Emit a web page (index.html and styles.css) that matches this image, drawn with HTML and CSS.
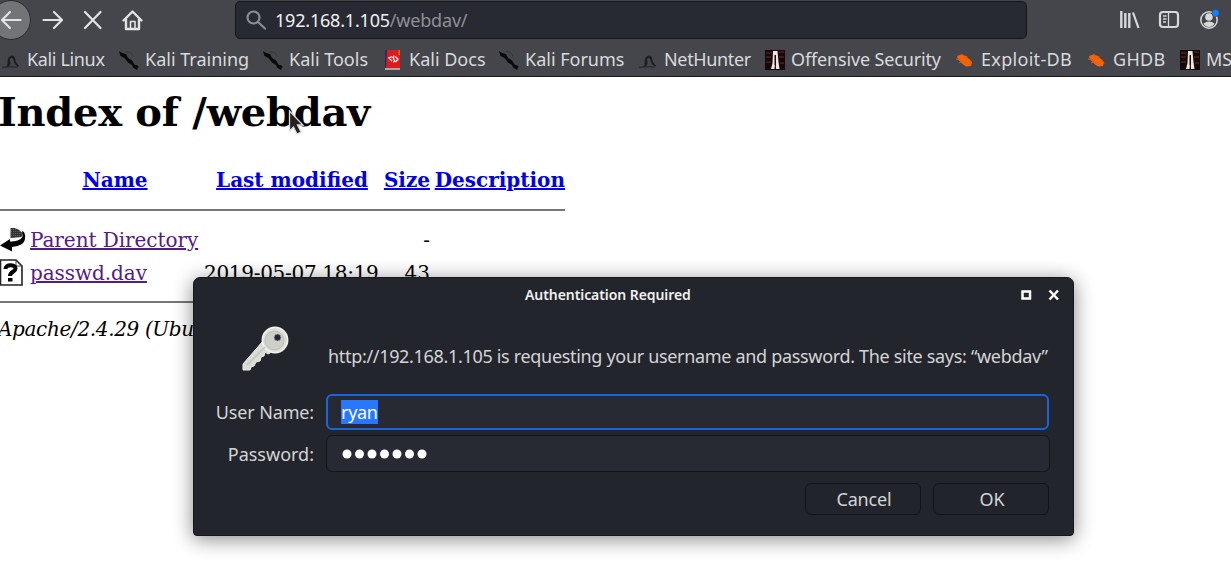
FILE: index.html
```html
<!DOCTYPE html>
<html lang="en">
<head>
<meta charset="utf-8">
<title>Index of /webdav</title>
<link rel="stylesheet" href="styles.css">
</head>
<body>
<svg class="defs" width="0" height="0" aria-hidden="true">
  <symbol id="dragon" viewBox="0 0 21 20">
    <path d="M1 17.500c5-1 10-1 16-.3" fill="none" stroke="#2c2d30" stroke-width="1.300"/>
    <path d="M4.500 17c3-1 1.500-5 2.500-8C8 5 13 4 14 8c.5 3 1 5 4 7.500l-1 1c-4-2-4-5-5-7.500-1-2-3-1-3 1 1 4 1 6-4.500 7z" fill="#1d1e20"/>
  </symbol>
  <symbol id="blade" viewBox="0 0 21 20">
    <path d="M0 1l3 2 4 1 2 4 4 2.500 2.500 4 4 1.500-1.500 4-4-2.500-1-2.500-4-2.500-3.500-4.500-4-2z" fill="#080909"/>
    <path d="M7 1.500c4 0 6 2 7 5" fill="none" stroke="#303236" stroke-width=".8"/>
  </symbol>
  <symbol id="book" viewBox="0 0 21 20">
    <path d="M2 0h4v18H2z" fill="#202f59"/><path d="M4 0h13v18H3z" fill="#dc1c1c"/>
    <path d="M15.500 0H17v5h-1.500z" fill="#d36b24"/><path d="M2 18h15v2H2z" fill="#aaa5a8"/>
    <path d="M9 6.500L6 8l3 3M11 5.500l-1 2 1.500 3-1 2M12 6.500L15 9l-2.500 3" fill="none" stroke="#fff" stroke-width="1.300"/>
  </symbol>
  <symbol id="offsec" viewBox="0 0 21 20">
    <path d="M0 0h20v20H0z" fill="#170708"/>
    <path d="M1 3h6M1 7h5M1 12h5M14 2h5M14 7h5M15 13h4" stroke="#5d3434" stroke-width="1"/>
    <path d="M8 1h4.500l1 11 1 7H11L10.500 8 9.500 19H6l1.500-6z" fill="#eee5df"/><path d="M9.500 5h1.500v10h-1.500z" fill="#151010"/>
  </symbol>
  <symbol id="bug" viewBox="0 0 21 20">
    <path d="M2 6l4-1.500 5 1.500 3 3 3 3-1 4-5 .5-4-3-4-4z" fill="#f5640b"/>
    <path d="M1 9l5 1M7 4l2 3M12 6l-1 3M14 9l3 5M4 13l4-2M8 15l3-3" stroke="#e05b0d" stroke-width="1"/>
  </symbol>
</svg>

<header class="browser">
  <div class="toolbar">
    <div class="nav">
      <svg width="150" height="40" viewBox="0 0 150 40" fill="none" stroke="#e2e3e4" stroke-width="2.200" stroke-linecap="round" stroke-linejoin="round">
        <circle cx="11" cy="20" r="19.500" fill="#727477" stroke="#292b2e" stroke-width="1"/>
        <path d="M20.500 20H2.500M10 12L2 20l8 8"/>
        <path d="M43.500 20H61M54 12l8 8-8 8"/>
        <path d="M85 12l15.500 16M100.500 12L85 28"/>
        <path d="M123.500 20.500l9-9 9 9M126 19v10h13V19" stroke-width="2.400"/>
        <path d="M130.500 28v-6.500h4.500V28" stroke-width="1.600"/>
      </svg>
    </div>
    <div class="urlbar">
      <svg width="24" height="24" viewBox="0 0 24 24" fill="none" stroke="#8b8d93" stroke-width="2.200" stroke-linecap="round"><circle cx="7.500" cy="9.500" r="6"/><path d="M12 14l7 6.500"/></svg>
      <div class="url"><span class="host">192.168.1.105</span><span class="path">/webdav/</span></div>
    </div>
    <svg class="tools" width="111" height="40" viewBox="0 0 111 40" fill="none" stroke="#d7d8d9">
      <path d="M1.300 11v17M5.300 13v15M9.300 13v15" stroke-width="2.400"/><path d="M13 12.500l5.500 15.500" stroke-width="2.200"/>
      <rect x="40" y="12" width="18" height="15" rx="3" stroke-width="2.200"/><path d="M48.500 12v15M43 16h3.500M43 19h3.500M43 22h3" stroke-width="1.300"/>
      <circle cx="89" cy="20" r="8.200" stroke-width="1.500"/><circle cx="89" cy="17" r="3.800" fill="#d7d8d9" stroke="none"/><path d="M83.500 23.500q5.500-4 11 0-2 3.500-5.500 3.500t-5.500-3.500z" fill="#d7d8d9" stroke="none"/>
      <circle cx="95.500" cy="13" r="3.600" fill="#0a84ff" stroke="#43454b" stroke-width=".6"/>
    </svg>
  </div>
  <nav class="bookmarks">
    <a><svg><use href="#dragon"/></svg><span class="tight">Kali Linux</span></a>
    <a><svg><use href="#blade"/></svg><span>Kali Training</span></a>
    <a><svg><use href="#blade"/></svg><span>Kali Tools</span></a>
    <a><svg><use href="#book"/></svg><span>Kali Docs</span></a>
    <a><svg><use href="#blade"/></svg><span>Kali Forums</span></a>
    <a><svg><use href="#dragon"/></svg><span class="tight">NetHunter</span></a>
    <a><svg><use href="#offsec"/></svg><span class="snug">Offensive Security</span></a>
    <a><svg><use href="#bug"/></svg><span class="wide">Exploit-DB</span></a>
    <a><svg><use href="#bug"/></svg><span class="wide">GHDB</span></a>
    <a><svg><use href="#offsec"/></svg><span>MS</span></a>
  </nav>
</header>

<main class="listing">
  <h1>Index of /webdav</h1>
  <div class="row head"><i></i><b><a>Name</a></b><b><a>Last modified</a></b><b><a>Size</a></b><b><a>Description</a></b></div>
  <div class="rule"></div>
  <div class="row">
    <svg width="26" height="26" viewBox="0 0 26 26"><path d="M10.500 1h4l4 1.500 4 3.500-1 4-11 1z" fill="#333"/><path d="M11 2.500h8M11 4.500h10M11 6.500h11M11 8.500h10" stroke="#777" stroke-width=".7" stroke-dasharray="1 1"/><path d="M22 4c3 1 3.500 4 3 8-1 5-5 7-13 8v4.500L0 18.500 10 12v2.500c5 0 11-1 12.500-5z" fill="#050505"/></svg>
    <a class="visited">Parent Directory</a><span></span><span class="size">-</span>
  </div>
  <div class="row file">
    <svg width="26" height="28" viewBox="0 0 26 28"><path d="M.5 1H16l6 6v19H.5z" fill="#fff" stroke="#222" stroke-width="1.600"/><path d="M16 1v6h6" fill="none" stroke="#444"/><path d="M5.500 10c0-5 10-5 10-.5 0 3.500-5.500 3-5.500 7.500" fill="none" stroke="#000" stroke-width="4"/><path d="M8 19h4.500v3.500H8z"/></svg>
    <a class="visited">passwd.dav</a><span class="date">2019-05-07 18:19</span><span class="size">43</span>
  </div>
  <div class="rule second"></div>
  <address>Apache/2.4.29 (Ubu</address>
</main>

<section class="dialog">
  <div class="titlebar"><strong>Authentication Required</strong>
    <svg width="40" height="14" viewBox="0 0 40 14" fill="none" stroke="#fff"><path d="M2.500 3.500h7.500v7H2.500z" stroke-width="2.500"/><path d="M29.500 2.500l8.500 9M38 2.500l-8.500 9" stroke-width="2.500"/></svg>
  </div>
  <div class="message">
    <svg width="50" height="50" viewBox="0 0 50 50">
      <path d="M22 18l6 8 1 4-2 1-3-2-1 4-3 1-1 4-4 1-2 4-3 1-1 3H2v-6z" fill="#dcdcd6" stroke="#f0f0eb" stroke-width="1"/>
      <circle cx="34" cy="17" r="12.700" fill="#dfdfda" stroke="#f3f3ee" stroke-width="1.500"/>
      <circle cx="33.500" cy="17.500" r="9.500" fill="#cfcfca" stroke="#b8b8b2" stroke-width=".8"/>
      <path d="M6 42l18-18" stroke="#c3c3bd" stroke-width="1.300"/>
      <circle cx="36.500" cy="14.500" r="3.500" fill="#25272e" stroke="#aaa" stroke-width=".8"/>
    </svg>
    <p><span>http://192.168.1.105 is requesting your username and password. The site says: “webdav”</span></p>
  </div>
  <div class="field"><label><span class="snug">User Name:</span></label><div class="input focused"><span class="selection">ryan</span></div></div>
  <div class="field password"><label><span>Password:</span></label><div class="input"><svg width="88" height="12" fill="#fff"><circle cx="6" cy="6" r="4.500"/><circle cx="18.500" cy="6" r="4.500"/><circle cx="31" cy="6" r="4.500"/><circle cx="43.500" cy="6" r="4.500"/><circle cx="56" cy="6" r="4.500"/><circle cx="68.500" cy="6" r="4.500"/><circle cx="81" cy="6" r="4.500"/></svg></div></div>
  <div class="buttons"><div class="button">Cancel</div><div class="button ok">OK</div></div>
</section>
<svg class="cursor" width="17" height="27" viewBox="0 0 17 27"><path d="M1.500 1v20l4-4 3.500 7 4-2-3.500-7H15z" fill="#222" stroke="#ddd" stroke-width="1.300"/></svg>
</body>
</html>
```

FILE: styles.css
```css
* { box-sizing: border-box; }
body { margin: 0; width: 1231px; height: 586px; overflow: hidden; background: #fff; font-family: "Noto Sans", sans-serif; }
.defs { position: absolute; }
.browser { height: 77px; background: #44464c; border-bottom: 1px solid #17181b; color: #d9dadb; font-size: 18px; overflow: hidden; }
.toolbar { height: 40px; display: flex; }
.nav { width: 235px; height: 40px; }
.nav svg, .tools { display: block; }
.urlbar { width: 792px; height: 38px; margin-top: 1px; padding: 0 10px; border: 1px solid #15161a; border-radius: 5px; background: #282a33; display: flex; align-items: center; }
.url { margin-left: 5px; white-space: nowrap; letter-spacing: -.2px; }
.host { color: #f0f0f1; }
.path { color: #8e9095; }
.tools { margin-left: 93px; }
.bookmarks { height: 36px; padding: 2px 0 0 2px; display: grid; grid-template-columns: 118px 144px 120px 116px 139px 127px 190px 132px 93px 60px; align-items: center; }
.bookmarks a { display: flex; align-items: center; white-space: nowrap; }
.bookmarks svg { width: 21px; height: 20px; margin: 2px 5px 0 -1px; flex: none; }
.tight { letter-spacing: -.35px; }
.snug { letter-spacing: -.15px; }
.wide { letter-spacing: .3px; }
.listing { height: 509px; overflow: hidden; font-family: "DejaVu Serif", serif; font-size: 20px; color: #000; }
h1 { margin: 11px 0 0 -2px; font-size: 40px; line-height: 48px; letter-spacing: -.27px; white-space: nowrap; }
.row { width: 565px; height: 32px; display: grid; grid-template-columns: 30px 169px 184px 47px 135px; align-items: center; white-space: nowrap; }
.row > a { letter-spacing: -.06px; }
.row.head { height: 30px; margin-top: 29px; text-align: center; }
.row.head b:nth-child(2) { padding-left: 1px; }
.row.head b:nth-child(3) { padding-left: 2px; }
.row.head b:nth-child(4), .row.head b:nth-child(5) { text-align: right; }
.row.head a { color: #0000ee; text-decoration: underline; }
.row .date { padding-left: 5px; letter-spacing: -.3px; }
.row .size { text-align: right; }
.row.file { height: 33px; padding-top: 1px; }
.rule { width: 565px; height: 2px; margin: 14px 0 13px; background: #777; }
.rule.second { margin: 12px 0; }
.visited { color: #551a8b; text-decoration: underline; }
address { margin-left: -2px; line-height: 28px; letter-spacing: -.35px; white-space: nowrap; }
.dialog { position: absolute; left: 193px; top: 277px; width: 881px; height: 259px; border: 1px solid #15171b; border-radius: 7px 7px 4px 4px; background: #23252d; box-shadow: 0 3px 20px rgba(0,0,0,.48); color: #d3d4d5; font-size: 18px; overflow: hidden; }
.titlebar { height: 33px; display: grid; grid-template-columns: 1fr 53px; align-items: center; color: #f0f0f0; font-size: 14px; }
.titlebar strong { padding-left: 331px; font-weight: 600; letter-spacing: -.07px; }
.message { height: 82px; display: flex; align-items: flex-start; }
.message svg { width: 50px; height: 50px; margin: 12px 0 0 47px; }
.message p { margin: 32px 0 0 37px; line-height: 26px; letter-spacing: -.32px; white-space: nowrap; }
.field { height: 37px; display: flex; align-items: center; }
.field label { width: 120px; text-align: right; white-space: nowrap; }
.input { width: 724px; height: 37px; margin-left: 12px; padding-left: 14px; display: flex; align-items: center; background: #282a33; border: 1px solid #121419; border-radius: 6px; }
.input.focused { width: 723px; border: 2px solid #1c63dc; padding-left: 13px; height: 36px; }
.selection { background: #2777ff; color: #fff; line-height: 24px; letter-spacing: -.3px; }
.password { margin-top: 5px; }
.buttons { display: flex; gap: 12px; margin: 11px 24px 0; justify-content: flex-end; letter-spacing: -.15px; }
.button { width: 116px; height: 32px; border: 1px solid #121419; border-radius: 6px; background: #22242b; display: flex; align-items: center; justify-content: center; padding-left: 2px; }
.cursor { position: absolute; left: 288px; top: 110px; }
```
